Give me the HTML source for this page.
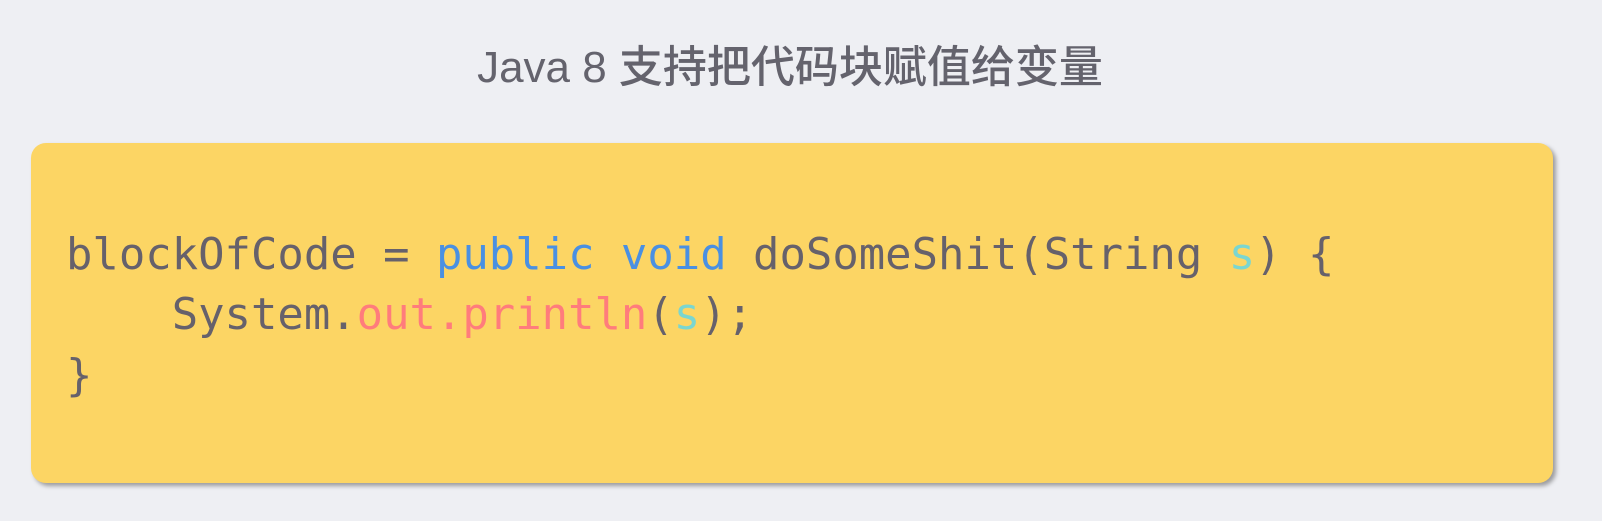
<!DOCTYPE html>
<html><head><meta charset="utf-8"><style>
html,body{margin:0;padding:0;}
body{width:1602px;height:521px;background:#eeeff3;position:relative;overflow:hidden;}
.t{position:absolute;left:0;width:1580px;top:31px;line-height:56px;text-align:center;font:500 44px "Liberation Sans","Noto Sans CJK SC",sans-serif;color:#64636d;}
.box{position:absolute;left:31px;top:143px;width:1522px;height:340px;background:#fcd564;border-radius:15px;box-shadow:3px 3px 4px rgba(0,0,0,0.35);}
pre{position:absolute;left:66px;top:225px;margin:0;font:43.9px/60.3px "DejaVu Sans Mono","Liberation Mono",monospace;color:#66616b;}
.k{color:#4a90e2}.v{color:#7ad6d0}.r{color:#ff7c7c}
</style></head><body>
<div class="t">Java 8 支持把代码块赋值给变量</div>
<div class="box"></div>
<pre>blockOfCode = <span class="k">public void</span> doSomeShit(String <span class="v">s</span>) {
    System.<span class="r">out.println</span>(<span class="v">s</span>);
}</pre>
</body></html>
